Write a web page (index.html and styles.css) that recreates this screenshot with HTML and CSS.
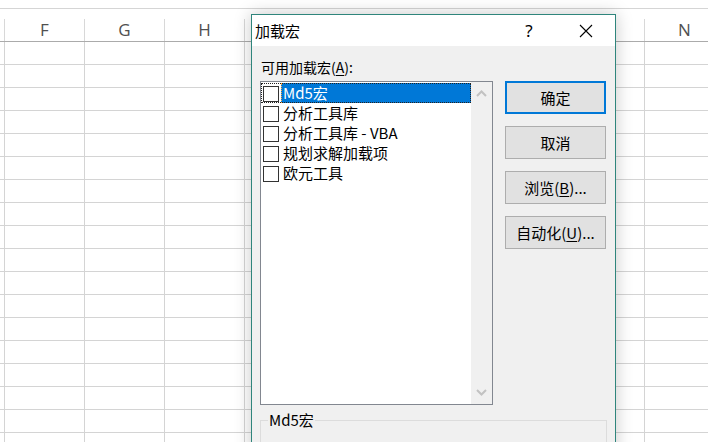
FILE: index.html
```html
<!DOCTYPE html>
<html lang="zh-CN">
<head>
<meta charset="utf-8">
<title>加载宏</title>
<link rel="stylesheet" href="styles.css">
</head>
<body>
<div class="sheet">
  <div class="sheet-top"></div>
  <div class="col-header">
    <div class="hcell hcell-stub"></div>
    <div class="hcell">F</div>
    <div class="hcell">G</div>
    <div class="hcell">H</div>
    <div class="hcell"></div>
    <div class="hcell"></div>
    <div class="hcell"></div>
    <div class="hcell"></div>
    <div class="hcell"></div>
    <div class="hcell">N</div>
  </div>
  <div class="grid"></div>
</div>

<div class="dialog">
  <div class="titlebar">
    <span class="title">加载宏</span>
    <span class="help">?</span>
    <span class="close">
      <svg width="14" height="14" viewBox="0 0 14 14"><path d="M1 1L13 13M13 1L1 13" stroke="#000" stroke-width="1.1" fill="none"/></svg>
    </span>
  </div>
  <div class="body">
    <div class="main">
      <div class="left">
        <div class="label">可用加载宏(<u>A</u>):</div>
        <div class="listbox">
          <ul class="items">
            <li class="item item-sel"><span class="cb"></span><span class="name">Md5宏</span></li>
            <li class="item"><span class="cb"></span><span class="name">分析工具库</span></li>
            <li class="item"><span class="cb"></span><span class="name">分析工具库 - VBA</span></li>
            <li class="item"><span class="cb"></span><span class="name">规划求解加载项</span></li>
            <li class="item"><span class="cb"></span><span class="name">欧元工具</span></li>
          </ul>
          <div class="scrollbar">
            <svg class="arrow" width="11" height="7" viewBox="0 0 11 7"><path d="M1 6L5.5 1.5L10 6" stroke="#c2c2c2" stroke-width="2" fill="none"/></svg>
            <svg class="arrow" width="11" height="7" viewBox="0 0 11 7"><path d="M1 1L5.5 5.5L10 1" stroke="#c2c2c2" stroke-width="2" fill="none"/></svg>
          </div>
        </div>
      </div>
      <div class="buttons">
        <button class="btn btn-default">确定</button>
        <button class="btn">取消</button>
        <button class="btn">浏览(<u>B</u>)...</button>
        <button class="btn">自动化(<u>U</u>)...</button>
      </div>
    </div>
    <fieldset class="group">
      <legend>Md5宏</legend>
    </fieldset>
  </div>
</div>
</body>
</html>
```
FILE: styles.css
```css
html, body {
  margin: 0;
  padding: 0;
}
body {
  width: 708px;
  height: 442px;
  overflow: hidden;
  position: relative;
  background: #fff;
  font-family: "Noto Sans CJK SC", "Noto Sans", sans-serif;
}

/* spreadsheet */
.sheet {
  width: 708px;
  height: 442px;
  display: flex;
  flex-direction: column;
}
.sheet-top {
  height: 8px;
  border-bottom: 1px solid #d5d5d5;
  flex: none;
}
.col-header {
  height: 32px;
  border-bottom: 1px solid #ababab;
  display: flex;
  flex: none;
}
.hcell {
  flex: none;
  border-right: 1px solid transparent;
  background: linear-gradient(#d8d8d8, #d8d8d8) right 10px / 1px 22px no-repeat;
  background-origin: border-box;
  display: flex;
  align-items: center;
  justify-content: center;
  font-family: "Open Sans", "Noto Sans", sans-serif;
  font-size: 17px;
  color: #505050;
  padding-top: 8px;
  box-sizing: border-box;
  height: 32px;
  width: 80px;
}
.hcell-stub {
  width: 5px;
}
.grid {
  flex: 1;
  background-image:
    linear-gradient(to bottom, transparent 22px, #d4d4d4 22px),
    linear-gradient(to right, transparent 79px, #d4d4d4 79px);
  background-size: 100% 23px, 80px 100%;
  background-position: 0 0, 5px 0;
}

/* dialog window */
.dialog {
  position: absolute;
  left: 251px;
  top: 14px;
  width: 363px;
  height: 460px;
  border: 1px solid #2f857c;
  background: #f0f0f0;
  box-shadow: 0 0 16px rgba(0, 0, 0, 0.22);
}
.titlebar {
  height: 31px;
  background: #fff;
  display: flex;
  align-items: center;
  font-size: 15px;
  color: #000;
}
.title {
  padding-left: 3px;
}
.help {
  margin-left: auto;
  width: 14px;
  text-align: center;
  font-family: "Noto Sans", sans-serif;
  font-size: 17px;
  line-height: 20px;
  margin-right: 43px;
}
.close {
  width: 14px;
  height: 14px;
  margin-right: 22px;
  display: flex;
}
.body {
  padding: 11px 8px 0 8px;
}
.main {
  display: flex;
  gap: 12px;
}
.left {
  width: 233px;
  display: flex;
  flex-direction: column;
}
.label {
  font-size: 14px;
  line-height: 20px;
  height: 20px;
  padding-left: 1px;
  margin-bottom: 4px;
  color: #000;
}
.label u, .btn u {
  text-decoration-thickness: 1px;
  text-underline-offset: 2px;
}
.listbox {
  height: 322px;
  border: 1px solid #828790;
  background: #fff;
  display: flex;
}
.items {
  list-style: none;
  margin: 0;
  padding: 1px 0 0 0;
  flex: 1;
}
.item {
  height: 20px;
  display: flex;
  align-items: flex-end;
  padding-left: 2px;
  font-size: 15px;
  color: #000;
  box-sizing: border-box;
}
.item-sel {
  outline: 1px dotted #222;
  outline-offset: -1px;
}
.cb {
  width: 14px;
  height: 14px;
  border: 1px solid #333;
  background: #fff;
  flex: none;
  margin-bottom: 1px;
}
.name {
  flex: 1;
  height: 20px;
  line-height: 20px;
  padding-left: 2px;
  margin-left: 2px;
  white-space: nowrap;
}
.item-sel .name {
  background: #0078d7;
  color: #fff;
  outline: 1px dotted #f7a84a;
  outline-offset: -1px;
}
.scrollbar {
  width: 21px;
  background: #f0f0f0;
  display: flex;
  flex-direction: column;
  justify-content: space-between;
  align-items: center;
  padding: 8px 0 8px 0;
  box-sizing: border-box;
}
.buttons {
  width: 101px;
  display: flex;
  flex-direction: column;
  gap: 12px;
  padding-top: 24px;
}
.btn {
  height: 33px;
  width: 101px;
  box-sizing: border-box;
  border: 1px solid #adadad;
  background: #e1e1e1;
  font-family: "Noto Sans CJK SC", "Noto Sans", sans-serif;
  font-size: 15px;
  color: #000;
  padding: 0;
  margin: 0;
}
.btn-default {
  border: 2px solid #0078d7;
}
.group {
  margin: 6px 0 0 0;
  padding: 0 0 0 7px;
  border: 1px solid #dcdcdc;
  height: 60px;
}
.group legend {
  padding: 0 1px;
  font-size: 15px;
  line-height: 18px;
  color: #000;
}
```
